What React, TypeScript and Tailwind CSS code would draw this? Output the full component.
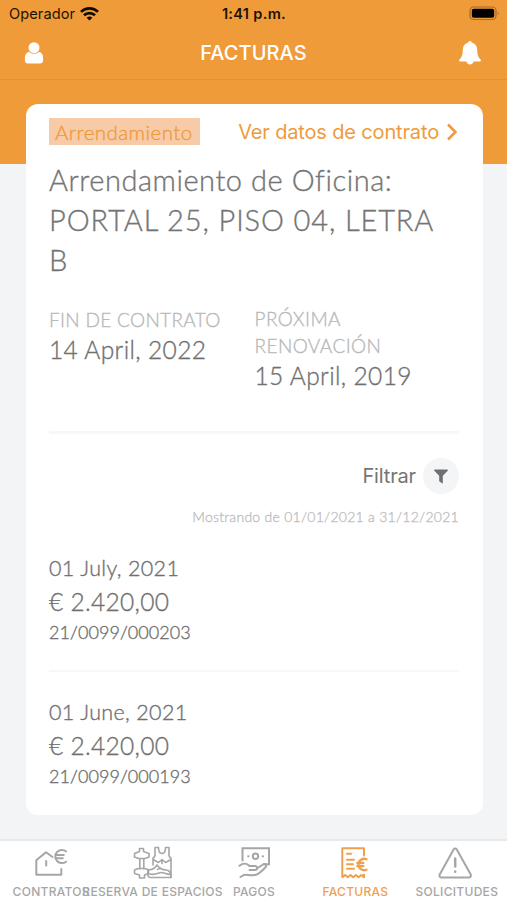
import { ReactNode } from 'react';

const soft = "font-['Lato','Noto_Sans',sans-serif] font-light [-webkit-text-stroke:0.35px_currentColor] whitespace-nowrap";

function StatusBar() {
  return (
    <div className="grid h-[27px] grid-cols-3 items-center pl-[9px] pr-[7px] text-[14.6px] leading-[18px] text-[#1d1206]">
      <div className="flex items-center gap-[5px] tracking-[0.08px]">
        Operador
        <svg width="19" height="14" viewBox="0 0 19 14" fill="none" stroke="#120b03" strokeWidth="2.7">
          <path d="M1 4.900a12.200 12.200 0 0 1 17 0" />
          <path d="M4 8.300a7.800 7.800 0 0 1 11 0" />
          <path d="M9.500 13.600 6.600 10.800a4.200 4.200 0 0 1 5.800 0z" fill="#120b03" stroke="none" />
        </svg>
      </div>
      <div className="-ml-[1px] text-center font-semibold tracking-[0.300px]">1:41 p.m.</div>
      <div className="flex justify-end">
        <svg width="31" height="15" viewBox="0 0 31 15">
          <rect x="1" y="1" width="26" height="12.500" rx="3.600" fill="none" stroke="#a66b28" strokeWidth="1.200" />
          <rect x="2.800" y="2.800" width="22.400" height="9" rx="2" fill="#000" />
          <path d="M28.600 5.200q2 2 0 4z" fill="#a66b28" />
        </svg>
      </div>
    </div>
  );
}

function TitleBar() {
  return (
    <div className="flex h-[53px] items-center justify-between border-b border-[#e59038] pl-6 pr-[25px] pb-[1px] text-white">
      <svg width="20" height="24" viewBox="0 0 20 24" fill="#fff">
        <circle cx="10" cy="6.700" r="5.500" />
        <path d="M5 10.800c2.900 2.700 7.100 2.700 10 0 2.600.8 4.100 2.900 4.100 5.900v2.900c0 1.800-1.200 3-3 3H3.900c-1.800 0-3-1.200-3-3v-2.900c0-3 1.500-5.100 4.100-5.900z" />
      </svg>
      <h1 className="pl-[5px] text-[20px] font-medium leading-6 tracking-[0.050px]">FACTURAS</h1>
      <svg width="24" height="26" viewBox="0 0 24 26" fill="#fff">
        <path d="M12 1c1 0 1.700.7 1.700 1.600 3.500.8 5.300 3.500 5.500 7 .2 5.400 1 7.700 3.300 9.900.9.900.5 2-.8 2h-6.100c-.5 1.900-1.800 3-3.600 3s-3.100-1.100-3.600-3H2.300c-1.300 0-1.700-1.100-.8-2 2.300-2.200 3.100-4.500 3.300-9.900.2-3.500 2-6.200 5.500-7C10.300 1.700 11 1 12 1z" />
      </svg>
    </div>
  );
}

function Invoice({ date, amount, code }: { date: string; amount: string; code: string }) {
  return (
    <div className={`${soft} text-[#707070]`}>
      <p className="text-[21.500px] leading-[31px] tracking-[0.350px]">{date}</p>
      <p className="text-[24.500px] leading-[35px] tracking-[0.300px]">{amount}</p>
      <p className="text-[18px] leading-[26px] tracking-[0.060px]">{code}</p>
    </div>
  );
}

function Tab({ label, active, children }: { label: string; active?: boolean; children: ReactNode }) {
  return (
    <div className={`flex w-0 flex-1 flex-col items-center ${active ? 'text-[#f0a04c]' : 'text-[#a6a6a6]'}`}>
      <svg width="40" height="36" viewBox="0 0 40 36" fill="none" stroke="currentColor" strokeWidth="1.600" strokeLinecap="round" strokeLinejoin="round">
        {children}
      </svg>
      <span className="mt-[3px] whitespace-nowrap pl-[1px] text-[12px] font-medium leading-4 tracking-[0.300px]">{label}</span>
    </div>
  );
}

export default function App() {
  return (
    <div className="flex h-[900px] w-[507px] flex-col overflow-hidden bg-[#f2f4f6] font-['Inter','Liberation_Sans',sans-serif]">
      <header className="h-[164px] shrink-0 bg-[#f09b39]">
        <StatusBar />
        <TitleBar />
      </header>

      <main className="relative -mt-[60px] ml-[25.500px] h-[711px] w-[457px] shrink-0 rounded-[12px] bg-white px-[23.500px] pt-[14px]">
        <div className="flex h-[27px] items-center justify-between text-[#ee9b3d]">
          <span className={`${soft} h-[27px] w-[151px] bg-[#f8cba8] pl-[6px] text-[20.500px] leading-[28px] tracking-[0.450px]`}>Arrendamiento</span>
          <a className="flex items-center gap-[7px] whitespace-nowrap pr-[1px] pt-[2px] text-[20px] leading-[27px] tracking-[-0.150px]">
            Ver datos de contrato
            <svg width="12" height="18" viewBox="0 0 12 18" fill="none" stroke="currentColor" strokeWidth="2.500" className="-mt-[1px]">
              <path d="m2 1.500 7.500 7.500L2 16.500" />
            </svg>
          </a>
        </div>

        <h2 className={`${soft} mt-[15px] text-[29px] leading-[40px] text-[#747474]`}>
          <span className="block tracking-[0.550px]">Arrendamiento de Oficina:</span>
          <span className="block tracking-[0.880px]">PORTAL 25, PISO 04, LETRA</span>
          <span className="block">B</span>
        </h2>

        <div className={`${soft} mt-[26px] flex h-[128px] border-b-[3px] border-[#f7f7f8]`}>
          <div className="w-[205.500px]">
            <p className="text-[19px] leading-[27px] tracking-[0.330px] text-[#b9b9b9]">FIN DE CONTRATO</p>
            <p className="text-[24.500px] leading-[34px] tracking-[0.370px] text-[#707070]">14 April, 2022</p>
          </div>
          <div>
            <p className="text-[19px] leading-[26.500px] tracking-[0.430px] text-[#b9b9b9]">PRÓXIMA<br />RENOVACIÓN</p>
            <p className="text-[24.500px] leading-[34px] tracking-[0.370px] text-[#707070]">15 April, 2019</p>
          </div>
        </div>

        <div className="mt-[24px] flex h-9 items-center justify-end gap-[7px] text-[20px] tracking-[-0.150px] text-[#757575]">
          Filtrar
          <span className="flex h-9 w-9 items-center justify-center rounded-full bg-[#f3f5f6]">
            <svg width="14" height="15" viewBox="0 0 14 15" fill="#707070">
              <path d="M.8.500h12.400c.7 0 .9.800.5 1.200L8.800 6.700v7.200c0 .6-.5.700-.9.400L5.600 12.600c-.3-.2-.4-.4-.4-.7V6.700L.300 1.700C-.1 1.300.1.500.8.500z" />
            </svg>
          </span>
        </div>
        <p className={`${soft} mt-[13px] text-right text-[14px] leading-[20px] tracking-[0.270px] text-[#bfbfbf]`}>Mostrando de 01/01/2021 a 31/12/2021</p>

        <div className="mt-[26px]">
          <Invoice date="01 July, 2021" amount="€ 2.420,00" code="21/0099/000203" />
          <div className="mb-[25px] mt-[25px] h-[2px] bg-[#f7f7f8]" />
          <Invoice date="01 June, 2021" amount="€ 2.420,00" code="21/0099/000193" />
        </div>
      </main>

      <nav className="mt-[24px] flex h-[61px] border-t-2 border-[#e8e9eb] bg-white pt-[4px]">
        <Tab label="CONTRATOS">
          <g transform="translate(0 -.5)">
            <path d="M21.500 12.500 15 7.800 5.300 15.800V30.200H30.300V24.500M15.200 16.500v4.500" strokeWidth="2" />
            <path d="M35 6.800a6.600 6.600 0 1 0 0 10.400M24.300 10.500h8.500M24.300 13.700h7.500" strokeWidth="2" />
          </g>
        </Tab>
        <Tab label="RESERVA DE ESPACIOS">
          <path d="M2.500 8.500 7.500 6.500V3.500h4v3l5.500 2v3.500l-4 1.500H6.500l-4-1.500zM7.800 13.500V24M11.800 13.500V24M2.500 25l3.500-1.500h7l3.500 1.500v3.500l-4 1.500v3h-5v-3l-5-1.500z" />
          <path d="M23 2.500h3.500c0 4 1 6 3.500 6s3.500-2 3.500-6H37v7c0 2 .5 3 2 3.500V32.500M23 2.500v7c0 2-.5 3-2 3.500v7M21 14.500l5.500 3 3.500-3 3.500 3 5.500-3M30 14.500v4" />
          <path d="M16.500 24.500c3.500 1 6-1 8.500-4.500 2 3 5 5 9 5 3 0 5 2 5 7.500H18c-2.500 0-3-6-1.500-8zM17.500 29c6 1.500 9-1.500 12-1.500s4 2 9 2M25.500 24.500l3-1.500" />
        </Tab>
        <Tab label="PAGOS">
          <path d="M8.500 15.500V3.300H35v16h-5" strokeWidth="2" strokeLinejoin="miter" />
          <circle cx="21.500" cy="11.300" r="2.700" strokeWidth="2" />
          <path d="M14.300 11.300h.1M28.800 11.300h.1" strokeWidth="2.300" />
          <path d="M5.500 20.800c3.500-3 7.500-2.500 10 .2h5.500c3 0 2.800 4 0 4h-5.500M22.800 23.500l6.200-4c2.500-1.300 4.200 1 2.500 2.800-5 5-7 7.200-10.500 7.700-5.500.7-9-1-11.500.2l-3 1.800" strokeWidth="2" />
        </Tab>
        <Tab label="FACTURAS" active>
          <path d="M29 10.500V3.300H7.300v29l2.800-2.300 2.700 2.300 2.700-2.300 2.700 2.300 2.700-2.300 2.700 2.300 2.700-2.300 2.700 2.300V29.500" strokeWidth="2" />
          <path d="M12 8.800h4M12 14.800h7M12 19.300h6M12 23.800h7" strokeWidth="2" />
          <path d="M31.500 14.300a5.700 5.700 0 1 0 0 10.400M22.300 18h6M22.300 21.200h6" strokeWidth="2.300" />
        </Tab>
        <Tab label="SOLICITUDES">
          <path d="M19.200 3.500c.7 0 1.200.4 1.600 1L34.700 29.500c.7 1.500 0 3-1.600 3H5.300c-1.600 0-2.300-1.500-1.600-3L17.600 4.500c.4-.6.900-1 1.600-1z" strokeWidth="2" />
          <path d="M19.200 13.500v8M19.200 26.500v.3" strokeWidth="2.500" />
        </Tab>
      </nav>
    </div>
  );
}
